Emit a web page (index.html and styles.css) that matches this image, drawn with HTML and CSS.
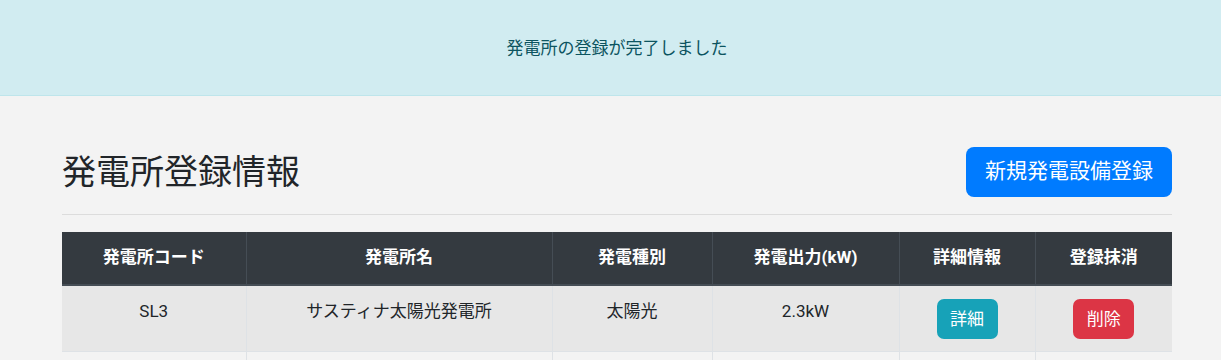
FILE: index.html
```html
<!DOCTYPE html>
<html lang="ja">
<head>
<meta charset="utf-8">
<link rel="stylesheet" href="styles.css">
</head>
<body>
<div class="alert"><span class="alert-text">発電所の登録が完了しました</span></div>
<main class="page">
  <div class="container">
    <div class="head">
      <h1 class="title">発電所登録情報</h1>
      <a class="btn btn-primary btn-lg">新規発電設備登録</a>
    </div>
    <hr class="rule">
    <table class="table">
      <colgroup>
        <col class="c1"><col class="c2"><col class="c3"><col class="c4"><col class="c5"><col class="c6">
      </colgroup>
      <thead>
        <tr>
          <th>発電所コード</th>
          <th>発電所名</th>
          <th>発電種別</th>
          <th>発電出力(kW)</th>
          <th>詳細情報</th>
          <th>登録抹消</th>
        </tr>
      </thead>
      <tbody>
        <tr class="odd">
          <td>SL3</td>
          <td>サスティナ太陽光発電所</td>
          <td>太陽光</td>
          <td>2.3kW</td>
          <td><a class="btn btn-info">詳細</a></td>
          <td><a class="btn btn-danger">削除</a></td>
        </tr>
        <tr>
          <td>&nbsp;</td><td></td><td></td><td></td><td></td><td></td>
        </tr>
      </tbody>
    </table>
  </div>
</main>
</body>
</html>
```

FILE: styles.css
```css
html, body {
  margin: 0;
  padding: 0;
}
body {
  background: #f3f3f3;
  font-family: Roboto, "Noto Sans CJK JP", sans-serif;
  font-size: 17px;
  color: #212529;
  line-height: 1.5;
}
.alert {
  display: flex;
  align-items: center;
  justify-content: center;
  background: #d1ecf1;
  color: #0c5460;
  border-bottom: 1px solid #bee5eb;
  font-size: 17px;
  padding: 2px 0 0 13px;
  box-sizing: border-box;
  height: 96px;
}
.page {
  padding-left: 13px;
}
.container {
  width: 1110px;
  margin: 0 auto;
  padding-top: 51px;
}
.head {
  display: flex;
  align-items: center;
  justify-content: space-between;
  height: 50px;
}
.title {
  margin: 0;
  font-size: 34px;
  font-weight: 400;
  line-height: 1.2;
  color: #212529;
}
.btn {
  display: inline-flex;
  align-items: center;
  justify-content: center;
  color: #fff;
  text-decoration: none;
  box-sizing: border-box;
}
.btn-primary {
  background: #007bff;
}
.btn-lg {
  height: 50px;
  width: 206px;
  font-size: 21px;
  border-radius: 8px;
}
.rule {
  margin: 17px 0 0;
  border: 0;
  border-top: 1px solid #dcdcdc;
  height: 0;
}
.table {
  margin-top: 17px;
  width: 100%;
  border-collapse: collapse;
  table-layout: fixed;
}
.c1 { width: 184px; }
.c2 { width: 306px; }
.c3 { width: 160px; }
.c4 { width: 187px; }
.c5 { width: 136px; }
.c6 { width: 137px; }
th {
  background: #343a40;
  color: #fff;
  font-weight: 700;
  font-size: 17px;
  height: 53px;
  padding: 0 12px;
  border: 1px solid #454d55;
  border-top: 0;
  border-bottom: 2px solid #454d55;
  vertical-align: middle;
  text-align: center;
  box-sizing: border-box;
}
thead tr th:first-child { border-left: 0; }
thead tr th:last-child { border-right: 0; }
td {
  text-align: center;
  vertical-align: top;
  padding: 13px 12px 12px;
  border: 1px solid #dee2e6;
  font-size: 17px;
  height: 40px;
  line-height: 24px;
}
td:first-child { border-left: 0; }
td:last-child { border-right: 0; }
tr.odd td {
  background: #e7e7e7;
  border-top: 0;
}
.btn-info, .btn-danger {
  width: 61px;
  height: 40px;
  border-radius: 7px;
  font-size: 17px;
}
.btn-info { background: #17a2b8; }
.btn-danger { background: #dc3545; }
```
